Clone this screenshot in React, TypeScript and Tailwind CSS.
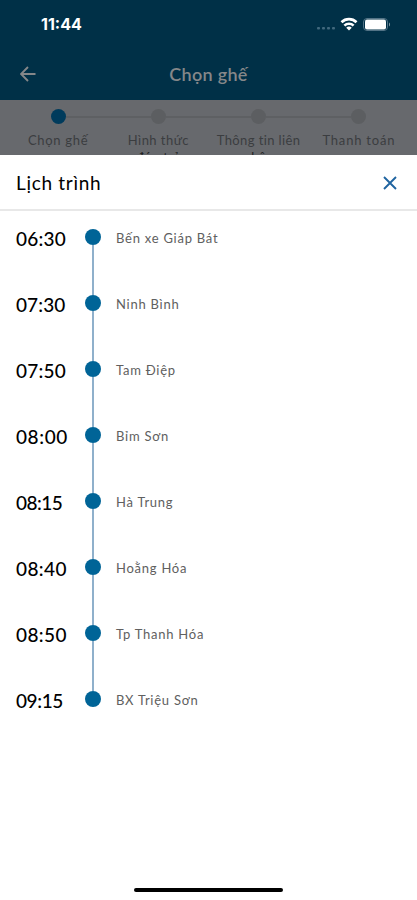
import React from "react";
import clsx from "clsx";

const steps = [
  { label: "Chọn ghế", more: "", active: true, className: "tracking-[0.7px]" },
  { label: "Hình thức", more: "đón trả", active: false, className: "tracking-[0.45px]" },
  { label: "Thông tin liên", more: "hệ", active: false, className: "tracking-[0.4px]" },
  { label: "Thanh toán", more: "", active: false, className: "tracking-[0.8px]" },
];

const stops = [
  { time: "06:30", name: "Bến xe Giáp Bát", className: "tracking-[0.2px]" },
  { time: "07:30", name: "Ninh Bình", className: "tracking-[0.1px]" },
  { time: "07:50", name: "Tam Điệp", className: "tracking-[0.2px]" },
  { time: "08:00", name: "Bỉm Sơn", className: "tracking-[0.6px]" },
  { time: "08:15", name: "Hà Trung", className: "tracking-[-0.5px]" },
  { time: "08:40", name: "Hoằng Hóa", className: "tracking-[0.4px]" },
  { time: "08:50", name: "Tp Thanh Hóa", className: "tracking-[0.4px]" },
  { time: "09:15", name: "BX Triệu Sơn", className: "tracking-[-0.4px]" },
];

const StatusBar = () => (
  <div className="flex h-12 items-center justify-between pl-[41px] pr-[26px]">
    <span className="font-['Inter',sans-serif] text-[16px] font-bold leading-none text-white">11:44</span>
    <div className="flex items-center">
      <svg width="20" height="4" viewBox="0 0 20 4" className="mr-[4px] mt-[8px] fill-[#41687d]">
        <rect x="1" y="1" width="3" height="2.4" rx="1" />
        <rect x="6" y="1" width="3" height="2.4" rx="1" />
        <rect x="11" y="1" width="3" height="2.4" rx="1" />
        <rect x="16" y="1" width="3" height="2.4" rx="1" />
      </svg>
      <svg width="18" height="14" viewBox="0 0 18 14" fill="none" stroke="#fff" strokeWidth="2.7" className="mr-[5px]">
        <path d="M1.5 5.2a10.8 10.8 0 0 1 15 0" />
        <path d="M4.4 8.6a6.6 6.6 0 0 1 9.2 0" />
        <path d="M6.2 10.8 9 13.6l2.8-2.8a4 4 0 0 0-5.6 0Z" fill="#fff" stroke="none" />
      </svg>
      <svg width="28" height="13" viewBox="0 0 28 13">
        <rect x="0.5" y="0.5" width="24" height="12" rx="3.5" fill="none" stroke="#527386" />
        <rect x="2" y="1.5" width="21" height="10" rx="2" fill="#fff" />
        <path d="M26 4.5v4c1.4-.5 1.4-3.5 0-4Z" fill="#7d95a3" />
      </svg>
    </div>
  </div>
);

const Stepper = () => (
  <div className="grid h-[55px] grid-cols-4 overflow-hidden bg-[#67696d] px-2 pt-[9px]">
    {steps.map((step, index) => (
      <div key={step.label} className="flex flex-col items-center">
        <div className="flex w-full items-center">
          <span className={clsx("h-[2px] flex-1", index > 0 && "bg-[#5e6063]")} />
          <span className={clsx("size-[15px] rounded-full", step.active ? "bg-[#003b5c]" : "bg-[#5c5e61]")} />
          <span className={clsx("h-[2px] flex-1", index < steps.length - 1 && "bg-[#5e6063]")} />
        </div>
        <span className={clsx("mt-[8px] text-center text-[13px] leading-[17px] text-[#3b3d40]", step.className)}>
          {step.label}
          {step.more && <span className="block text-[#202123]">{step.more}</span>}
        </span>
      </div>
    ))}
  </div>
);

const App = () => {
  return (
    <div className="flex h-[900px] w-[417px] flex-col overflow-hidden bg-white font-['Lato','Noto_Sans',sans-serif]">
      <header className="h-[100px] bg-[#003047]">
        <StatusBar />
        <div className="grid h-[52px] grid-cols-[1fr_auto_1fr] items-center pl-[20px] pr-[20px]">
          <svg width="16" height="16" viewBox="0 0 16 16" fill="none" stroke="#858789" strokeWidth="1.9">
            <path d="M15.5 8H1.5M8 1 1 8l7 7" />
          </svg>
          <h1 className="text-[18px] font-semibold tracking-[0.3px] text-[#858789]">Chọn ghế</h1>
        </div>
      </header>
      <Stepper />
      <main className="flex flex-1 flex-col bg-white">
        <div className="flex h-[56px] items-center justify-between border-b-2 border-[#e8e8e8] pl-[16px] pr-[20px]">
          <h2 className="pt-[2px] text-[19px] tracking-[0.7px] text-black">Lịch trình</h2>
          <button type="button" aria-label="Đóng" className="pt-[2px]">
            <svg width="14" height="14" viewBox="0 0 14 14" fill="none" stroke="#1f64a0" strokeWidth="1.9">
              <path d="m1 1 12 12M13 1 1 13" />
            </svg>
          </button>
        </div>
        <ul className="pt-[18px]">
          {stops.map((stop, index) => (
            <li key={stop.time} className="flex h-[66px] pl-[16px]">
              <span className={clsx("w-[69px] pt-[1px] text-[19px] font-medium leading-[18px] text-black", stop.className)}>
                {stop.time}
              </span>
              <div className="flex w-[16px] flex-col items-center">
                <span className="size-[16px] shrink-0 rounded-full bg-[#006497]" />
                {index < stops.length - 1 && <span className="w-[2px] flex-1 bg-[#8fb0cb]" />}
              </div>
              <span className="ml-[15px] text-[13px] leading-[18px] tracking-[0.75px] text-[#606060]">{stop.name}</span>
            </li>
          ))}
        </ul>
        <div className="mx-auto mb-[8px] mt-auto h-[4px] w-[149px] rounded-full bg-black" />
      </main>
    </div>
  );
};

export default App;
